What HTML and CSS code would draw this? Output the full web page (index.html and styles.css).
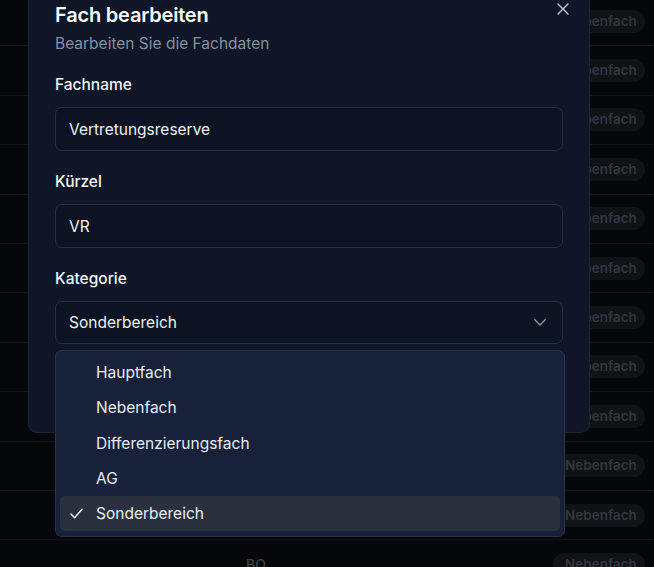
FILE: index.html
```html
<!DOCTYPE html>
<html lang="de">
<head>
<meta charset="utf-8">
<title>Fach bearbeiten</title>
<link rel="stylesheet" href="styles.css">
</head>
<body>
<div class="table">
  <div class="row"><span class="code">DE</span><span class="badge">Nebenfach</span></div>
  <div class="row"><span class="code">MA</span><span class="badge">Nebenfach</span></div>
  <div class="row"><span class="code">EN</span><span class="badge">Nebenfach</span></div>
  <div class="row"><span class="code">FR</span><span class="badge">Nebenfach</span></div>
  <div class="row"><span class="code">BI</span><span class="badge">Nebenfach</span></div>
  <div class="row"><span class="code">CH</span><span class="badge">Nebenfach</span></div>
  <div class="row"><span class="code">PH</span><span class="badge">Nebenfach</span></div>
  <div class="row"><span class="code">GE</span><span class="badge">Nebenfach</span></div>
  <div class="row"><span class="code">EK</span><span class="badge">Nebenfach</span></div>
  <div class="row"><span class="code">KU</span><span class="badge">Nebenfach</span></div>
  <div class="row"><span class="code">MU</span><span class="badge">Nebenfach</span></div>
  <div class="row"><span class="code">BO</span><span class="badge">Nebenfach</span></div>
</div>

<div class="dialog" role="dialog">
  <button class="close" aria-label="Schließen">
    <svg width="12" height="12" viewBox="0 0 12 12"><path d="M1 1L11 11M11 1L1 11" stroke="currentColor" stroke-width="1.4" stroke-linecap="round"/></svg>
  </button>
  <div class="header">
    <h2 class="title">Fach bearbeiten</h2>
    <p class="desc">Bearbeiten Sie die Fachdaten</p>
  </div>
  <div class="form">
    <div class="field">
      <label class="label">Fachname</label>
      <div class="input">Vertretungsreserve</div>
    </div>
    <div class="field">
      <label class="label">Kürzel</label>
      <div class="input">VR</div>
    </div>
    <div class="field">
      <label class="label">Kategorie</label>
      <div class="select-wrap">
        <div class="input select">
          <span>Sonderbereich</span>
          <svg class="chev" width="12" height="7" viewBox="0 0 12 7"><polyline points="0.8,0.8 6,6 11.2,0.8" fill="none" stroke="currentColor" stroke-width="1.4" stroke-linecap="round" stroke-linejoin="round"/></svg>
        </div>
        <div class="menu">
          <div class="item">Hauptfach</div>
          <div class="item">Nebenfach</div>
          <div class="item">Differenzierungsfach</div>
          <div class="item">AG</div>
          <div class="item selected">
            <svg class="check" width="13" height="11" viewBox="0 0 13 11"><polyline points="1,6 4.6,9.8 12,1.2" fill="none" stroke="currentColor" stroke-width="1.5" stroke-linecap="round" stroke-linejoin="round"/></svg>
            Sonderbereich
          </div>
        </div>
      </div>
    </div>
  </div>
  <div class="footer">
    <button class="btn btn-outline">Abbrechen</button>
    <button class="btn btn-primary">Speichern</button>
  </div>
</div>
</body>
</html>
```

FILE: styles.css
```css
* { box-sizing: border-box; }

html, body {
  margin: 0;
  padding: 0;
  height: 100%;
}

body {
  background: #06070a;
  font-family: Inter, "Noto Sans", sans-serif;
  overflow: hidden;
  position: relative;
}

.table {
  margin-top: -3px;
  display: flex;
  flex-direction: column;
}

.row {
  height: 49.4px;
  border-bottom: 1px solid #121419;
  display: flex;
  align-items: center;
  padding: 0 9px 0 246px;
}

.code {
  flex: 1;
  color: #3d4148;
  font-size: 14px;
  font-weight: 500;
}

.badge {
  background: #111216;
  color: #33363c;
  font-size: 13.5px;
  font-weight: 600;
  border-radius: 999px;
  padding: 2px 11px 2px 12px;
  line-height: 19px;
  width: 92px;
  text-align: left;
}

.dialog {
  position: absolute;
  left: 28px;
  top: -22px;
  width: 562px;
  background: #0e1628;
  border: 1px solid #1d2637;
  border-radius: 9px;
  padding: 24px 26px 24px 26px;
  color: #f1f5f9;
}

.close {
  position: absolute;
  top: 24px;
  right: 20px;
  width: 12px;
  height: 12px;
  padding: 0;
  border: 0;
  background: none;
  color: #c3c8d0;
  display: flex;
}

.header {
  margin-bottom: 19px;
}

.title {
  margin: 0;
  font-size: 20px;
  line-height: 24px;
  font-weight: 600;
  color: #f8fafc;
  letter-spacing: -0.2px;
}

.desc {
  margin: 6px 0 0;
  font-size: 15.5px;
  line-height: 22px;
  color: #8590a2;
}

.form {
  display: flex;
  flex-direction: column;
  gap: 20px;
}

.field {
  display: flex;
  flex-direction: column;
  gap: 11px;
}

.label {
  font-size: 15.5px;
  line-height: 22px;
  font-weight: 500;
  color: #f1f5f9;
}

.input {
  height: 44px;
  border: 1px solid #243044;
  border-radius: 7px;
  background: #0c1424;
  padding: 0 14px 0 13px;
  display: flex;
  align-items: center;
  font-size: 15.5px;
  color: #eef2f7;
}

.select-wrap {
  position: relative;
}

.select {
  justify-content: space-between;
  height: 43px;
}

.chev {
  color: #8b94a4;
  margin-right: 2px;
}

.menu {
  position: absolute;
  top: calc(100% + 6px);
  left: 0;
  width: 510px;
  background: #17213a;
  border: 1px solid #2a3449;
  border-radius: 7px;
  padding: 4px 4px 5px;
  z-index: 5;
}

.item {
  height: 35.3px;
  display: flex;
  align-items: center;
  padding-left: 36px;
  position: relative;
  border-radius: 5px;
  font-size: 15.5px;
  color: #e8edf3;
}

.item.selected {
  background: #2a313e;
}

.check {
  position: absolute;
  left: 10px;
  top: 12px;
  color: #eef2f7;
}

.footer {
  margin-top: 24px;
  display: flex;
  justify-content: flex-end;
  gap: 8px;
}

.btn {
  height: 40px;
  padding: 0 16px;
  border-radius: 7px;
  font-family: inherit;
  font-size: 15px;
  font-weight: 500;
}

.btn-outline {
  background: #0c1424;
  border: 1px solid #243044;
  color: #f1f5f9;
}

.btn-primary {
  background: #f1f5f9;
  border: 0;
  color: #0f172a;
}
```
